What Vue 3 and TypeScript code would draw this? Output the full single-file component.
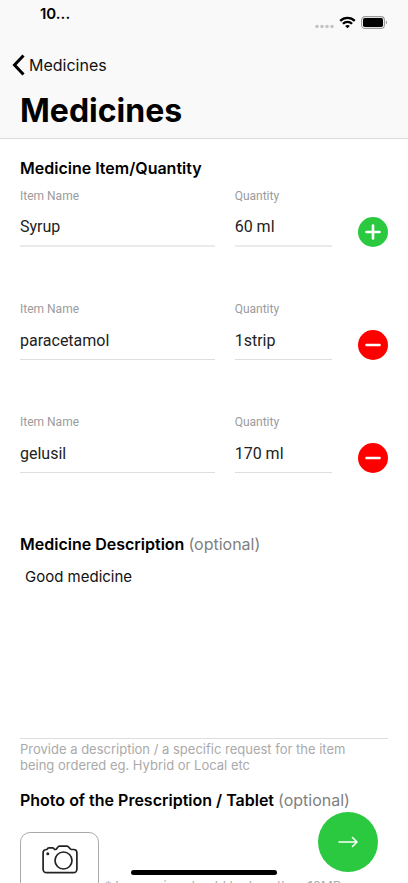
<script setup lang="ts">
import { ref } from 'vue'

interface MedicineItem {
  id: number
  name: string
  quantity: string
}

const items = ref<MedicineItem[]>([
  { id: 1, name: 'Syrup', quantity: '60 ml' },
  { id: 2, name: 'paracetamol', quantity: '1strip' },
  { id: 3, name: 'gelusil', quantity: '170 ml' },
])
const description = ref('Good medicine')
let nextId = 4

function changeRow(index: number) {
  if (index === 0) {
    items.value.push({ id: nextId++, name: '', quantity: '' })
  } else {
    items.value.splice(index, 1)
  }
}
</script>

<template>
  <div class="screen">
    <header class="header">
      <div class="status">
        <span class="time">10...</span>
        <div class="indicators">
          <svg width="19" height="5" viewBox="0 0 19 5" fill="#c4c4c6" aria-hidden="true">
            <circle cx="2" cy="2.5" r="1.8" />
            <circle cx="7" cy="2.5" r="1.8" />
            <circle cx="12" cy="2.5" r="1.8" />
            <circle cx="17" cy="2.5" r="1.8" />
          </svg>
          <svg class="wifi" width="17" height="13" viewBox="0 0 17 13" fill="none" stroke="#000" stroke-width="2.3" aria-hidden="true">
            <path d="M1.2 4.9C5.2 .8 11.8 .8 15.8 4.9" />
            <path d="M3.9 7.8C6.5 5.2 10.5 5.2 13.1 7.8" />
            <path d="M8.5 12.3L6.2 9.9C7.5 8.8 9.5 8.8 10.8 9.9Z" fill="#000" stroke="none" />
          </svg>
          <svg width="27" height="13" viewBox="0 0 27 13" aria-hidden="true">
            <rect x=".6" y=".6" width="22.8" height="11.8" rx="3.5" fill="none" stroke="#999" stroke-width="1.1" />
            <rect x="2" y="2" width="20" height="9" rx="1.8" fill="#000" />
            <path d="M24.8 4.5C26.4 5 26.4 8 24.8 8.5Z" fill="#999" />
          </svg>
        </div>
      </div>
      <a class="back" href="#medicines">
        <svg width="13" height="22" viewBox="0 0 13 22" fill="none" stroke="#000" stroke-width="3" aria-hidden="true">
          <path d="M11.5 1.5L2.5 11L11.5 20.5" />
        </svg>
        <span>Medicines</span>
      </a>
      <h1 class="title">Medicines</h1>
    </header>

    <main class="content">
      <section class="items">
        <h2 class="heading">Medicine Item/Quantity</h2>
        <div v-for="(item, index) in items" :key="item.id" class="row" :class="{ active: index === 0 }">
          <div class="field">
            <label :for="`name-${item.id}`">Item Name</label>
            <input :id="`name-${item.id}`" v-model="item.name" type="text" />
          </div>
          <div class="field">
            <label :for="`quantity-${item.id}`">Quantity</label>
            <input :id="`quantity-${item.id}`" v-model="item.quantity" type="text" />
          </div>
          <button
            type="button"
            class="round"
            :class="index === 0 ? 'add' : 'remove'"
            :aria-label="index === 0 ? 'Add item' : 'Remove item'"
            @click="changeRow(index)"
          >
            <svg width="30" height="30" viewBox="0 0 30 30" fill="none" stroke="#fff" stroke-width="2.6" stroke-linecap="round" aria-hidden="true">
              <path d="M8.5 15H21.5" />
              <path v-if="index === 0" d="M15 8.5V21.5" />
            </svg>
          </button>
        </div>
      </section>

      <section class="description">
        <h2 class="heading">
          <label for="description">Medicine Description <span class="optional">(optional)</span></label>
        </h2>
        <textarea id="description" v-model="description" aria-describedby="description-hint"></textarea>
        <p id="description-hint" class="hint">
          Provide a description / a specific request for the item being ordered eg. Hybrid or Local etc
        </p>
      </section>

      <section class="photo">
        <h2 class="heading">Photo of the Prescription / Tablet <span class="optional">(optional)</span></h2>
        <div class="upload">
          <button type="button" class="camera" aria-label="Add photo">
            <svg width="36" height="29" viewBox="0 0 36 29" fill="none" stroke="#222" stroke-width="1.7" stroke-linejoin="round" aria-hidden="true">
              <path d="M4 4.5L5 4.3C5.6 3 6 2.8 7 2.8H10.5C11.5 2.8 12 3.2 12.5 4.5H13.5C15 4.5 15.5 1.2 17.5 1.2H25C27 1.2 27.5 4.5 29.5 4.5H31.5C33.5 4.5 34.9 6 34.9 8V24C34.9 26 33.5 27.7 31.5 27.7H4.5C2.5 27.700 1.1 26 1.1 24V8C1.1 6 2.2 4.7 4 4.5Z" />
              <circle cx="21.500" cy="15.500" r="8.500" />
              <circle cx="5.800" cy="8.800" r="1.500" fill="#222" stroke="none" />
            </svg>
          </button>
          <p class="limit">* Image size should be less than 10MB</p>
        </div>
      </section>
    </main>

    <button type="button" class="next" aria-label="Continue">
      <svg width="20" height="12" viewBox="0 0 20 12" fill="none" stroke="#fff" stroke-width="1.6" stroke-linecap="round" stroke-linejoin="round" aria-hidden="true">
        <path d="M1 6H19M14.500 1.500L19 6L14.500 10.500" />
      </svg>
    </button>
    <div class="home-bar"></div>
  </div>
</template>

<style>
body {
  background: #fff;
}
</style>

<style scoped>
* {
  box-sizing: border-box;
}

.screen {
  display: flex;
  flex-direction: column;
  height: 100vh;
  overflow: hidden;
  color: #000;
  font-family: Inter, "Liberation Sans", sans-serif;
}

.header {
  flex: none;
  padding: 0 20px 7px;
  background: #f9f9f9;
  border-bottom: 1px solid #dcdcdc;
}

.status {
  display: flex;
  justify-content: space-between;
  height: 48px;
  padding: 4px 0 0 20px;
}

.time {
  font-size: 15px;
  font-weight: 600;
  line-height: 20px;
}

.indicators {
  display: flex;
  align-items: flex-start;
  gap: 5px;
  padding-top: 12px;
}

.indicators > :first-child {
  margin-top: 8px;
}

.back {
  display: inline-flex;
  align-items: center;
  gap: 4px;
  margin-left: -8px;
  height: 34px;
  color: #111;
  font-size: 16px;
  line-height: 20px;
  text-decoration: none;
}

.title {
  margin: 9px 0 0;
  font-size: 32px;
  font-weight: 700;
  line-height: 40px;
}

.content {
  flex: 1;
  min-height: 0;
  padding: 17px 20px 0;
  overflow-y: auto;
  scrollbar-width: none;
}

.heading {
  margin: 0;
  font-size: 16px;
  font-weight: 600;
  line-height: 24px;
}

.optional {
  color: #808080;
  font-weight: 400;
}

.row {
  display: grid;
  grid-template-columns: 2fr 1fr 36px;
  column-gap: 20px;
  height: 113px;
  padding-top: 8px;
  align-items: start;
}

.row > .round {
  justify-self: end;
  margin-top: 29px;
}

.active input {
  border-bottom: 2px solid #ebebeb;
}

.field {
  display: flex;
  flex-direction: column;
  min-width: 0;
  font-family: Roboto, "Liberation Sans", sans-serif;
}

.field label {
  color: #9b9b9b;
  font-size: 12px;
  line-height: 16px;
}

.field input {
  width: 100%;
  height: 43px;
  padding: 4px 0 0;
  color: #222;
  background: none;
  border: 0;
  border-bottom: 1px solid #dedede;
  border-radius: 0;
  font: 16px/20px Roboto, "Liberation Sans", sans-serif;
  outline: none;
}

.active .field input {
  border-bottom: 2px solid #ebebeb;
}

.round {
  width: 30px;
  height: 30px;
  padding: 0;
  border: 0;
  border-radius: 50%;
}

.round svg {
  display: block;
}

.add {
  background: #2ac940;
}

.remove {
  background: #f00;
}

.description {
  padding-top: 13px;
}

.description textarea {
  display: block;
  width: 100%;
  height: 183px;
  padding: 11px 5px;
  color: #111;
  background: none;
  border: 0;
  border-bottom: 1px solid #dedede;
  border-radius: 0;
  font: 15px/20px Inter, "Liberation Sans", sans-serif;
  resize: none;
  outline: none;
}

.hint {
  margin: 2px 0 0;
  padding-right: 20px;
  color: #aaa;
  font-size: 13px;
  line-height: 16px;
}

.photo {
  padding-top: 15px;
}

.upload {
  display: flex;
  align-items: flex-end;
  gap: 6px;
  padding: 20px 0 40px;
}

.camera {
  display: flex;
  flex: none;
  align-items: flex-start;
  justify-content: center;
  width: 79px;
  height: 64px;
  padding: 12px 0 0;
  background: #fff;
  border: 1px solid #aaa;
  border-radius: 10px;
}

.limit {
  margin: 0;
  color: #aaa;
  font-size: 13px;
  line-height: 20px;
}

.next {
  position: fixed;
  right: 30px;
  bottom: 11px;
  display: flex;
  align-items: center;
  justify-content: center;
  width: 60px;
  height: 60px;
  padding: 0;
  background: #2ac940;
  border: 0;
  border-radius: 50%;
}

.home-bar {
  position: fixed;
  bottom: 8px;
  left: 50%;
  width: 146px;
  height: 5px;
  background: #000;
  border-radius: 3px;
  transform: translateX(-50%);
}
</style>
